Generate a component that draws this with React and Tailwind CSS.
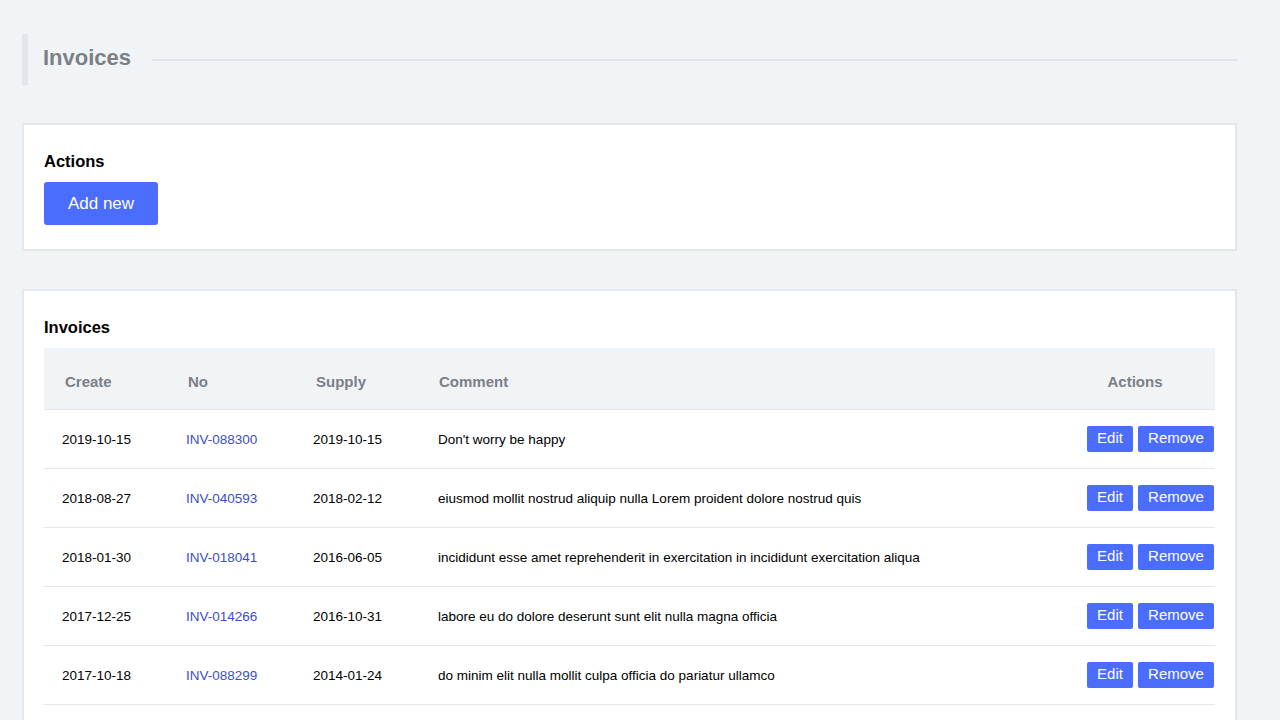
import React from "react";

const invoices = [
  { create: "2019-10-15", no: "INV-088300", supply: "2019-10-15", comment: "Don't worry be happy" },
  { create: "2018-08-27", no: "INV-040593", supply: "2018-02-12", comment: "eiusmod mollit nostrud aliquip nulla Lorem proident dolore nostrud quis" },
  { create: "2018-01-30", no: "INV-018041", supply: "2016-06-05", comment: "incididunt esse amet reprehenderit in exercitation in incididunt exercitation aliqua" },
  { create: "2017-12-25", no: "INV-014266", supply: "2016-10-31", comment: "labore eu do dolore deserunt sunt elit nulla magna officia" },
  { create: "2017-10-18", no: "INV-088299", supply: "2014-01-24", comment: "do minim elit nulla mollit culpa officia do pariatur ullamco" },
  { create: "2017-06-02", no: "INV-051127", supply: "2015-09-14", comment: "commodo velit ad sint fugiat anim qui cillum ex" },
  { create: "2016-11-09", no: "INV-032870", supply: "2015-03-21", comment: "aute veniam tempor nisi cupidatat laboris irure" },
];

const App = () => {
  return (
    <div className="min-h-screen bg-[#f0f4f7] pl-[22px] pr-[43px] pt-[34px] pb-10 font-['Liberation_Sans',Arial,sans-serif]">
      {/* page title */}
      <div className="flex items-center h-[51px] border-l-[6px] border-[#e2e6ea] pl-[15px]">
        <h1 className="text-[22px] font-bold text-[#7b7f86] mb-[4px]">Invoices</h1>
        <div className="flex-1 h-[2px] bg-[#e2e6ea] ml-[21px] mt-[1px]"></div>
      </div>

      {/* actions card */}
      <div className="mt-[38px] bg-white border-2 border-[#e4e8ec] px-5 pt-6 pb-6">
        <h2 className="text-[16.5px] leading-6 font-bold text-black">Actions</h2>
        <button className="mt-[9px] w-[114px] h-[43px] rounded-[3px] bg-[#4a6cff] text-white text-[17px]">
          Add new
        </button>
      </div>

      {/* invoices card */}
      <div className="mt-[38px] bg-white border-2 border-[#e4e8ec] px-5 pt-6 pb-6">
        <h2 className="text-[16.5px] leading-6 font-bold text-black">Invoices</h2>
        <table className="mt-[9px] w-full border-collapse">
          <thead>
            <tr className="bg-[#f0f4f7] border-b border-[#e3e7eb] h-[61px]">
              <th className="w-[124px] text-left pl-[21px] pt-[8px] text-[15px] font-bold text-[#7b7f86]">Create</th>
              <th className="w-[127px] text-left pl-[20px] pt-[8px] text-[15px] font-bold text-[#7b7f86]">No</th>
              <th className="w-[125px] text-left pl-[21px] pt-[8px] text-[15px] font-bold text-[#7b7f86]">Supply</th>
              <th className="text-left pl-[19px] pt-[8px] text-[15px] font-bold text-[#7b7f86]">Comment</th>
              <th className="w-[160px] text-center pt-[8px] text-[15px] font-bold text-[#7b7f86]">Actions</th>
            </tr>
          </thead>
          <tbody>
            {invoices.map((inv) => (
              <tr key={inv.no} className="h-[59px] border-b border-[#e3e7eb] text-[13.5px] text-black">
                <td className="pl-[18px] pt-[4px]">{inv.create}</td>
                <td className="pl-[18px] pt-[4px]">
                  <a href="#" className="text-[#3c4fc6]">{inv.no}</a>
                </td>
                <td className="pl-[18px] pt-[4px]">{inv.supply}</td>
                <td className="pl-[18px] pt-[4px]">{inv.comment}</td>
                <td className="text-right pr-[1px]">
                  <div className="flex justify-end gap-[5px]">
                    <button className="w-[46px] h-[26px] rounded-[2px] bg-[#4a6cff] text-white text-[15px]">Edit</button>
                    <button className="w-[76px] h-[26px] rounded-[2px] bg-[#4a6cff] text-white text-[15px]">Remove</button>
                  </div>
                </td>
              </tr>
            ))}
          </tbody>
        </table>
      </div>
    </div>
  );
};

export default App;
